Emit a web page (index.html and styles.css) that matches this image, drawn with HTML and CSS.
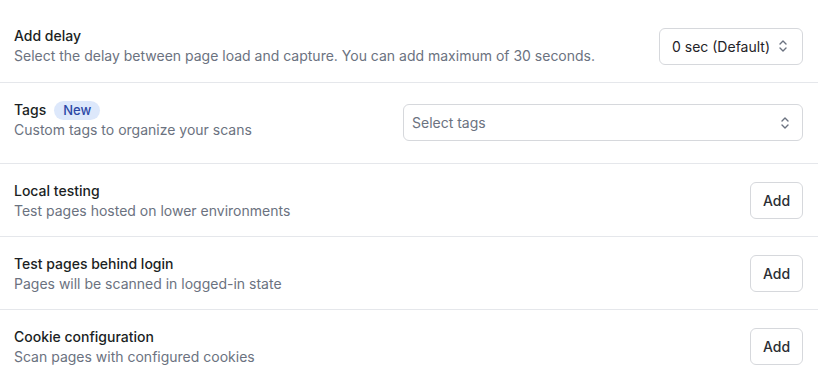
FILE: index.html
```html
<!DOCTYPE html>
<html>
<head>
<meta charset="utf-8">
<link rel="stylesheet" href="styles.css">
</head>
<body>
<div class="list">
  <div class="row row-first">
    <div class="info">
      <div class="title">Add delay</div>
      <div class="desc">Select the delay between page load and capture. You can add maximum of 30 seconds.</div>
    </div>
    <div class="select select-delay">
      <span class="value">0 sec (Default)</span>
      <svg class="chev" width="10" height="14" viewBox="0 0 10 14"><path d="M2 5 L5 2 L8 5 M2 9 L5 12 L8 9" fill="none" stroke="#6b7280" stroke-width="1.4" stroke-linecap="round" stroke-linejoin="round"/></svg>
    </div>
  </div>
  <div class="row row-tags">
    <div class="info">
      <div class="title">Tags <span class="badge">New</span></div>
      <div class="desc">Custom tags to organize your scans</div>
    </div>
    <div class="select select-tags">
      <span class="placeholder">Select tags</span>
      <svg class="chev" width="10" height="14" viewBox="0 0 10 14"><path d="M2 5 L5 2 L8 5 M2 9 L5 12 L8 9" fill="none" stroke="#6b7280" stroke-width="1.4" stroke-linecap="round" stroke-linejoin="round"/></svg>
    </div>
  </div>
  <div class="row">
    <div class="info">
      <div class="title">Local testing</div>
      <div class="desc">Test pages hosted on lower environments</div>
    </div>
    <button class="btn">Add</button>
  </div>
  <div class="row">
    <div class="info">
      <div class="title">Test pages behind login</div>
      <div class="desc">Pages will be scanned in logged-in state</div>
    </div>
    <button class="btn">Add</button>
  </div>
  <div class="row row-last">
    <div class="info">
      <div class="title">Cookie configuration</div>
      <div class="desc">Scan pages with configured cookies</div>
    </div>
    <button class="btn">Add</button>
  </div>
</div>
</body>
</html>
```
FILE: styles.css
```css
html, body {
  margin: 0;
  padding: 0;
  background: #ffffff;
}
body {
  font-family: Inter, "Noto Sans", sans-serif;
  font-size: 14px;
  color: #1f2328;
}
.list {
  width: 818px;
}
.row {
  display: flex;
  align-items: center;
  justify-content: space-between;
  padding: 17px 15px 15px 14px;
  border-bottom: 1px solid #e5e7eb;
}
.row-first {
  padding-top: 26px;
  padding-bottom: 16px;
}
.row-tags {
  align-items: flex-start;
  padding-top: 17px;
  padding-bottom: 22px;
}
.row-last {
  border-bottom: none;
}
.info {
  display: flex;
  flex-direction: column;
}
.title {
  font-weight: 500;
  line-height: 20px;
  color: #1b1f24;
  display: flex;
  align-items: center;
  gap: 8px;
}
.desc {
  line-height: 20px;
  color: #6b7280;
  margin-top: 0;
}
.badge {
  display: inline-block;
  background: #dde8fb;
  color: #2b47a5;
  font-size: 13px;
  font-weight: 500;
  line-height: 19px;
  padding: 0 9px;
  border-radius: 10px;
}
.select {
  box-sizing: border-box;
  height: 37px;
  border: 1px solid #d6d8dc;
  border-radius: 6px;
  display: flex;
  align-items: center;
  justify-content: space-between;
  background: #fff;
}
.select-delay {
  width: 144px;
  padding: 0 14px 0 12px;
  color: #1f2328;
}
.select-tags {
  width: 400px;
  margin-top: 4px;
  padding: 0 12px 0 8px;
}
.placeholder {
  color: #6b7280;
}
.chev {
  display: block;
}
.btn {
  box-sizing: border-box;
  height: 37px;
  width: 53px;
  margin-top: -2px;
  border: 1px solid #d6d8dc;
  border-radius: 6px;
  background: #fff;
  font-family: Inter, "Noto Sans", sans-serif;
  font-size: 14px;
  font-weight: 500;
  color: #2a2e33;
  padding: 0;
}
```
